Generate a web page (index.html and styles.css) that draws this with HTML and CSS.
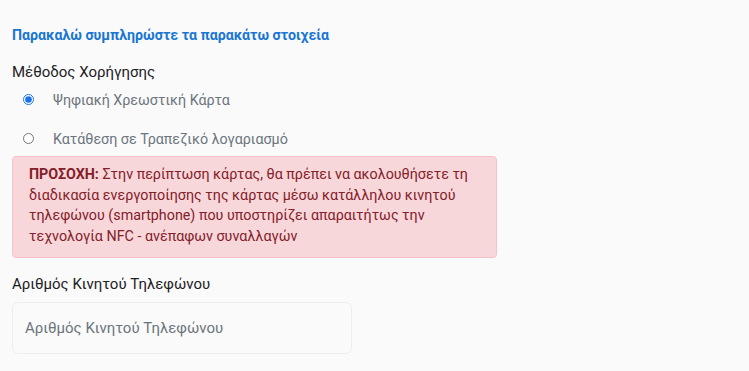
FILE: index.html
```html
<!DOCTYPE html>
<html lang="el">
<head>
    <meta charset="UTF-8">
    <meta name="viewport" content="width=device-width, initial-scale=1.0">
    <title>Στοιχεία</title>
    <link rel="stylesheet" href="styles.css">
</head>
<body>
    <div class="form">
        <h2 class="form-title">Παρακαλώ συμπληρώστε τα παρακάτω στοιχεία</h2>
        <div class="field-label">Μέθοδος Χορήγησης</div>
        <div class="options">
            <label class="option">
                <input type="radio" name="method" checked>
                <span>Ψηφιακή Χρεωστική Κάρτα</span>
            </label>
            <label class="option">
                <input type="radio" name="method">
                <span>Κατάθεση σε Τραπεζικό λογαριασμό</span>
            </label>
        </div>
        <div class="alert">
            <b>ΠΡΟΣΟΧΗ:</b> Στην περίπτωση κάρτας, θα πρέπει να ακολουθήσετε τη διαδικασία ενεργοποίησης της κάρτας μέσω κατάλληλου κινητού τηλεφώνου (smartphone) που υποστηρίζει απαραιτήτως την τεχνολογία NFC - ανέπαφων συναλλαγών
        </div>
        <label class="field-label" for="phone">Αριθμός Κινητού Τηλεφώνου</label>
        <input type="text" id="phone" class="text-input" placeholder="Αριθμός Κινητού Τηλεφώνου">
    </div>
</body>
</html>
```

FILE: styles.css
```css
body {
    margin: 0;
    background: #fafafa;
    font-family: Roboto, "Noto Sans", sans-serif;
    color: #212529;
}
.form {
    padding: 27px 12px 0;
    width: 485px;
}
.form-title {
    margin: 0 0 20px;
    font-size: 14.2px;
    font-weight: bold;
    color: #1976d2;
}
.field-label {
    display: block;
    font-size: 15px;
    font-weight: 400;
    color: #1d2125;
}
.options {
    display: flex;
    flex-direction: column;
    margin-top: -1px;
}
.option {
    display: flex;
    align-items: center;
    height: 39px;
    padding-left: 11px;
    font-size: 14.3px;
    color: #6c757d;
}
.option input {
    width: 11px;
    height: 11px;
    margin: 0 19px 0 0;
    accent-color: #1a73e8;
}
.alert {
    margin: -2px 0 17px;
    padding: 7px 16px 10px;
    background: #f8d7da;
    border: 1px solid #f5c2c7;
    border-radius: 4px;
    color: #842029;
    font-size: 14.3px;
    line-height: 20.7px;
}
.text-input {
    display: block;
    box-sizing: border-box;
    width: 340px;
    height: 52px;
    margin-top: 9px;
    padding: 0 12px;
    border: 1px solid #eceef0;
    border-radius: 6px;
    background: #fafafa;
    font-family: inherit;
    font-size: 15px;
}
.text-input::placeholder {
    color: #6c757d;
}
```
